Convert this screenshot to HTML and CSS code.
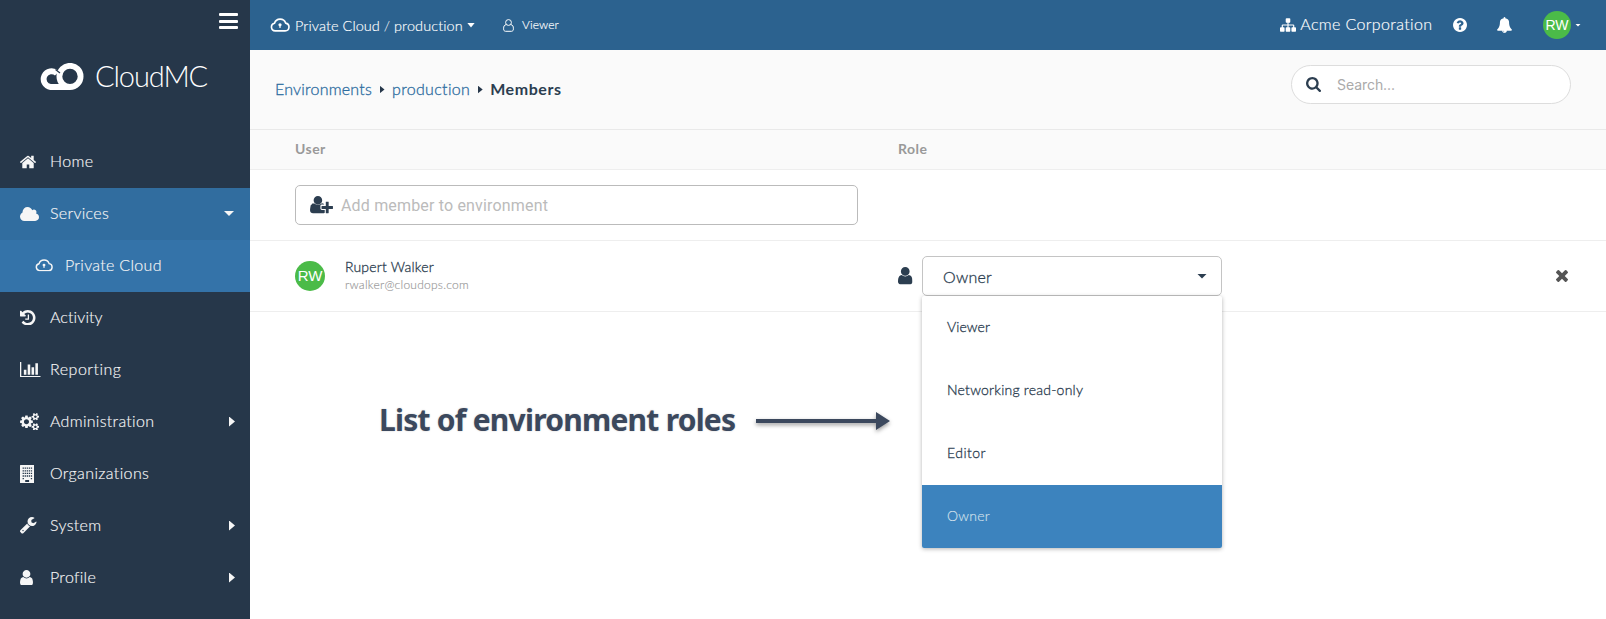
FILE: index.html
```html
<!DOCTYPE html>
<html lang="en">
<head>
<meta charset="utf-8">
<title>Members</title>
<link rel="stylesheet" href="styles.css">
</head>
<body>
<svg class="defs" width="0" height="0">
<symbol id="user" viewBox="256 128 1280 1536"><path d="M1536 1399q0 109-62.500 187t-150.500 78H469q-88 0-150.500-78T256 1399q0-85 8.500-160.500t31.500-152 58.500-131 94-89T583 832q131 128 313 128t313-128q76 0 134.500 34.500t94 89 58.500 131 31.500 152 8.500 160.500zm-256-887q0 159-112.500 271.500T896 896 624.500 783.500 512 512t112.500-271.500T896 128t271.500 112.500T1280 512z"/></symbol>
<symbol id="cloud-lock" viewBox="0 0 20 14"><path d="M5.200 12.900h9.900a3.900 3.900 0 0 0 .6-7.750A5.900 5.900 0 0 0 4.500 5.200a3.900 3.900 0 0 0 .7 7.700z" fill="none" stroke="currentColor" stroke-width="1.600"/><circle cx="10" cy="6.800" r="1.600"/><path d="M9.400 7h1.200v3.100H9.400z"/></symbol>
</svg>
<div class="app">
  <aside class="sidebar">
    <div class="menu-toggle"><i></i><i></i><i></i></div>
    <div class="brand">
      <svg class="brand-mark" width="45" height="28" viewBox="0 0 45 28"><g fill="none" stroke="#fff" stroke-width="5.800"><circle cx="31" cy="13.400" r="10.600"/><path d="M31 24H11.500A7.900 7.900 0 1 1 18 10.500"/></g><path d="M16.500 6.500l4.500 3.500" stroke="#26374a" stroke-width="1.200" fill="none"/></svg>
      <span class="brand-name">CloudMC</span>
    </div>
    <nav class="nav">
      <a class="item"><span class="ico"><svg width="16" height="14" viewBox="89 250 1614 1290"><path d="M1472 992v480q0 26-19 45t-45 19h-384v-384h-256v384h-384q-26 0-45-19t-19-45v-480q0-1 .5-3t.5-3l575-474 575 474q1 2 1 6zm223-69l-62 74q-8 9-21 11h-3q-13 0-21-7l-692-577-692 577q-12 8-24 7-13-2-21-11l-62-74q-8-10-7-23.500t11-21.500l719-599q32-26 76-26t76 26l244 204v-195q0-14 9-23t23-9h192q14 0 23 9t9 23v408l219 182q10 8 11 21.500t-7 23.500z"/></svg></span><span class="lbl n-home">Home</span></a>
      <a class="item open"><span class="ico"><svg width="19" height="14" viewBox="64 128 1920 1408"><path d="M1984 1152q0 159-112.500 271.500T1600 1536H512q-185 0-316.500-131.500T64 1088q0-132 71-241.500T322 683q-2-28-2-43 0-212 150-362t362-150q158 0 286.500 88T1306 446q70-62 166-62 106 0 181 75t75 181q0 75-41 138 129 30 213 134.500t84 239.500z"/></svg></span><span class="lbl">Services</span><b class="caret-down"></b></a>
      <a class="item sub"><span class="ico"><svg width="18" height="12.600"><use href="#cloud-lock"/></svg></span><span class="lbl">Private Cloud</span></a>
      <a class="item"><span class="ico"><svg width="15.500" height="15.500" viewBox="128 128 1536 1536"><path d="M1664 896q0 156-61 298t-164 245-245 164-298 61q-172 0-327-72.500T305 1387q-7-10-6.500-22.500t8.500-20.500l137-138q10-9 25-9 16 2 23 12 73 95 179 147t225 52q104 0 198.500-40.500T1258 1258t109.500-163.500T1408 896t-40.500-198.500T1258 534t-163.500-109.500T896 384q-98 0-188 35.500T548 521l137 138q31 30 14 69-17 40-59 40H192q-26 0-45-19t-19-45V256q0-42 40-59 39-17 69 14l130 129q107-101 244.500-156.500T896 128q156 0 298 61t245 164 164 245 61 298zM1024 608v448q0 14-9 23t-23 9H672q-14 0-23-9t-9-23v-64q0-14 9-23t23-9h224V608q0-14 9-23t23-9h64q14 0 23 9t9 23z"/></svg></span><span class="lbl n-activity">Activity</span></a>
      <a class="item"><span class="ico"><svg width="20.500" height="15.400" viewBox="0 128 2048 1536"><path d="M640 896v512H384V896h256zm384-512v1024H768V384h256zm1024 1152v128H0V128h128v1408h1920zm-640-896v768h-256V640h256zm384-384v1152h-256V256h256z"/></svg></span><span class="lbl n-reporting">Reporting</span></a>
      <a class="item"><span class="ico"><svg width="19.300" height="17.500" viewBox="-64 16 1920 1760"><path d="M832 896q0-106-75-181t-181-75-181 75-75 181 75 181 181 75 181-75 75-181zm768 512q0-52-38-90t-90-38-90 38-38 90q0 53 37.500 90.500t90.500 37.500 90.500-37.500 37.500-90.500zm0-1024q0-52-38-90t-90-38-90 38-38 90q0 53 37.500 90.500t90.500 37.500 90.500-37.500 37.500-90.500zm-384 421v185q0 10-7 19.500t-16 10.500l-155 24q-11 35-32 76 34 48 90 115 7 11 7 20 0 12-7 19-23 30-82.500 89.500t-78.500 59.500q-11 0-21-7l-115-90q-37 19-77 31-11 108-23 155-7 24-30 24h-186q-11 0-20-7.500t-10-17.500l-23-153q-34-10-75-31l-118 89q-7 7-20 7-11 0-21-8-144-133-144-160 0-9 7-19 10-14 41-53t47-61q-23-44-35-82l-152-24q-10-1-17-9.500t-7-19.500v-185q0-10 7-19.500t16-10.500l155-24q11-35 32-76-34-48-90-115-7-11-7-20 0-12 7-20 22-30 82-89t79-59q11 0 21 7l115 90q34-18 77-32 11-108 23-154 7-24 30-24h186q11 0 20 7.500t10 17.500l23 153q34 10 75 31l118-89q8-7 20-7 11 0 21 8 144 133 144 160 0 8-7 19-12 16-42 54t-45 60q23 48 34 82l152 23q10 2 17 10.500t7 19.500zm640 533v140q0 16-149 31-12 27-30 52 51 113 51 138 0 4-4 7-122 71-124 71-8 0-46-47t-52-68q-20 2-30 2t-30-2q-14 21-52 68t-46 47q-2 0-124-71-4-3-4-7 0-25 51-138-18-25-30-52-149-15-149-31v-140q0-16 149-31 13-29 30-52-51-113-51-138 0-4 4-7 4-2 35-20t59-34 30-16q8 0 46 46.500t52 67.500q20-2 30-2t30 2q51-71 92-112l6-2q4 0 124 70 4 3 4 7 0 25-51 138 17 23 30 52 149 15 149 31zm0-1024v140q0 16-149 31-12 27-30 52 51 113 51 138 0 4-4 7-122 71-124 71-8 0-46-47t-52-68q-20 2-30 2t-30-2q-14 21-52 68t-46 47q-2 0-124-71-4-3-4-7 0-25 51-138-18-25-30-52-149-15-149-31v-140q0-16 149-31 13-29 30-52-51-113-51-138 0-4 4-7 4-2 35-20t59-34 30-16q8 0 46 46.500t52 67.500q20-2 30-2t30 2q51-71 92-112l6-2q4 0 124 70 4 3 4 7 0 25-51 138 17 23 30 52 149 15 149 31z"/></svg></span><span class="lbl">Administration</span><b class="caret-right"></b></a>
      <a class="item"><span class="ico"><svg width="14.300" height="18" viewBox="0 0 14.300 18"><path fill-rule="evenodd" d="M.6 0h13.100q.6 0 .6.600v16.800q0 .6-.6.600H.6q-.6 0-.6-.6V.6Q0 0 .6 0zM5.200 15v2h3.900v-2z"/><path d="M2.600 3.200h9.500M2.600 5.800h9.500M2.600 8.400h9.500M2.600 11h9.500M2.600 13.600h1.300M10.800 13.600h1.300" stroke="#26374a" stroke-width="1.300" stroke-dasharray="1.300 .75"/></svg></span><span class="lbl n-org">Organizations</span></a>
      <a class="item"><span class="ico"><svg width="16.500" height="16.500" viewBox="85 128 1641 1643"><path d="M448 1472q0-26-19-45t-45-19-45 19-19 45 19 45 45 19 45-19 19-45zm644-420l-682 682q-37 37-90 37-52 0-91-37L123 1627q-38-36-38-90 0-53 38-91l681-681q39 98 114.500 173.500T1092 1052zm634-435q0 39-23 106-47 134-164.500 217.500T1280 1024q-185 0-316.500-131.500T832 576t131.500-316.500T1280 128q58 0 121.500 16.500T1509 191q16 11 16 28t-16 28l-293 169v224l193 107q5-3 79-48.500t135.500-81T1694 582q15 0 23.500 10t8.500 25z"/></svg></span><span class="lbl">System</span><b class="caret-right"></b></a>
      <a class="item"><span class="ico"><svg width="13" height="15.500"><use href="#user"/></svg></span><span class="lbl">Profile</span><b class="caret-right"></b></a>
    </nav>
  </aside>
  <main class="main">
    <header class="topbar">
      <svg class="top-cloud" width="20" height="14"><use href="#cloud-lock"/></svg>
      <span class="t-private">Private Cloud</span><span class="t-slash">/</span><span class="t-prod">production</span><b class="caret-down top-caret"></b>
      <svg class="role-ico" width="11" height="13" viewBox="0 0 11 13"><g fill="none" stroke="currentColor"><circle cx="5.500" cy="3.500" r="2.900"/><path d="M3.300 5.600C1.200 5.900.6 7.200.6 9.800c0 1.700.8 2.500 1.900 2.500h6c1.100 0 1.900-.8 1.900-2.500 0-2.600-.6-3.900-2.700-4.200"/></g></svg>
      <span class="t-viewer">Viewer</span>
      <span class="grow"></span>
      <svg class="sitemap" width="16" height="14" viewBox="0 128 1792 1536"><path d="M1792 1248v320q0 40-28 68t-68 28h-320q-40 0-68-28t-28-68v-320q0-40 28-68t68-28h96V960H960v192h96q40 0 68 28t28 68v320q0 40-28 68t-68 28H736q-40 0-68-28t-28-68v-320q0-40 28-68t68-28h96V960H320v192h96q40 0 68 28t28 68v320q0 40-28 68t-68 28H96q-40 0-68-28t-28-68v-320q0-40 28-68t68-28h96V960q0-52 38-90t90-38h512V640h-96q-40 0-68-28t-28-68V224q0-40 28-68t68-28h320q40 0 68 28t28 68v320q0 40-28 68t-68 28h-96v192h512q52 0 90 38t38 90v192h96q40 0 68 28t28 68z"/></svg>
      <span class="t-acme">Acme Corporation</span>
      <svg class="help" width="14" height="14" viewBox="128 128 1536 1536"><path d="M1024 1376v-192q0-14-9-23t-23-9H800q-14 0-23 9t-9 23v192q0 14 9 23t23 9h192q14 0 23-9t9-23zm256-672q0-88-55.500-163t-138.500-116-170-41q-243 0-371 213-15 24 8 42l132 100q7 6 19 6 16 0 25-12 53-68 86-92 34-24 86-24 48 0 85.500 26t37.500 59q0 38-20 61t-68 45q-63 28-115.500 86.500T768 1020v36q0 14 9 23t23 9h192q14 0 23-9t9-23q0-19 21.500-49.500T1100 957q32-18 49-28.500t46-35 44.500-48 28-60.500 12.500-81zm384 192q0 209-103 385.500T1281.500 1561 896 1664t-385.500-103T231 1281.500 128 896t103-385.500T510.500 231 896 128t385.500 103T1561 510.500 1664 896z"/></svg>
      <svg class="bell" width="15" height="16" viewBox="64 0 1664 1792"><path d="M912 1696q0-16-16-16-59 0-101.500-42.500T752 1536q0-16-16-16t-16 16q0 73 51.500 124.500T896 1712q16 0 16-16zm816-288q0 52-38 90t-90 38h-448q0 106-75 181t-181 75-181-75-75-181H192q-52 0-90-38t-38-90q50-42 91-88t85-119.500 74.500-158.500 50-206T384 576q0-152 117-282.500T808 135q-8-19-8-39 0-40 28-68t68-28 68 28 28 68q0 20-8 39 190 28 307 158.500T1408 576q0 139 19.500 260t50 206 74.500 158.500 85 119.500 91 88z"/></svg>
      <span class="avatar avatar-top">RW</span><b class="caret-down small"></b>
    </header>
    <section class="toolbar">
      <div class="crumbs"><a class="c-env">Environments</a><b class="crumb-sep"></b><a class="c-prod">production</a><b class="crumb-sep"></b><strong class="c-mem">Members</strong></div>
      <div class="search"><svg width="15" height="15" viewBox="64 128 1664 1664"><path d="M1216 832q0-185-131.500-316.500T768 384 451.500 515.500 320 832t131.500 316.500T768 1280t316.500-131.500T1216 832zm512 832q0 52-38 90t-90 38q-54 0-90-38l-343-342q-179 124-399 124-143 0-273.500-55.500t-225-150-150-225T64 832t55.500-273.500 150-225 225-150T768 128t273.500 55.500 225 150 150 225T1472 832q0 220-124 399l343 343q37 37 37 90z"/></svg><span class="s-ph">Search...</span></div>
    </section>
    <div class="row head"><div class="col-user">User</div><div class="col-role">Role</div></div>
    <div class="row add"><div class="add-box"><svg width="23" height="17.200" viewBox="0 128 2048 1536"><path d="M704 896q-159 0-271.500-112.500T320 512t112.500-271.500T704 128t271.500 112.500T1088 512 975.500 783.500 704 896zm960 128h352q13 0 22.500 9.500t9.500 22.500v192q0 13-9.500 22.500t-22.500 9.500h-352v352q0 13-9.500 22.500t-22.500 9.500h-192q-13 0-22.500-9.500t-9.500-22.500v-352h-352q-13 0-22.500-9.500t-9.500-22.500v-192q0-13 9.500-22.500t22.500-9.500h352V672q0-13 9.500-22.500t22.500-9.500h192q13 0 22.500 9.500t9.500 22.500v352zm-736 224q0 52 38 90t90 38h256v238q-68 50-171 50H267q-121 0-194-69t-73-190q0-53 3.500-103.500t14-109T44 1033t43-97.500 62-81 85.500-53.500T346 781q19 0 39 17 79 61 154.500 91.500T704 920t164.500-30.500T1023 798q20-17 39-17 132 0 217 96h-223q-52 0-90 38t-38 90v192z"/></svg><span class="a-ph">Add member to environment</span></div></div>
    <div class="row member">
      <div class="col-user person"><span class="avatar">RW</span><div class="ident"><div class="p-name">Rupert Walker</div><div class="p-mail">rwalker@cloudops.com</div></div></div>
      <div class="col-role role"><svg class="role-user" width="14.500" height="17.500"><use href="#user"/></svg>
        <div class="select"><span class="sel-val">Owner</span><b class="caret-down"></b>
          <div class="menu"><div class="opt o-viewer">Viewer</div><div class="opt">Networking read-only</div><div class="opt o-editor">Editor</div><div class="opt active">Owner</div></div>
        </div>
      </div>
      <svg class="remove" width="12" height="12" viewBox="302 366 1188 1188"><path d="M1490 1322q0 40-28 68l-136 136q-28 28-68 28t-68-28l-294-294-294 294q-28 28-68 28t-68-28l-136-136q-28-28-28-68t28-68l294-294-294-294q-28-28-28-68t28-68l136-136q28-28 68-28t68 28l294 294 294-294q28-28 68-28t68 28l136 136q28 28 28 68t-28 68l-294 294 294 294q28 28 28 68z"/></svg>
    </div>
    <div class="callout"><span class="note">List of environment roles</span><svg class="arrow" width="134" height="20" viewBox="0 0 134 20"><path d="M0 8h120V1l14 9-14 9v-7H0z"/></svg></div>
  </main>
</div>
</body>
</html>
```

FILE: styles.css
```css
* { box-sizing: border-box; }
body { margin: 0; font-family: Lato, "Open Sans", sans-serif; font-weight: 300; font-size: 16px; color: #2c3e50; background: #fff; }
svg { display: block; flex: none; fill: currentColor; }
.defs { position: absolute; }
span, a, strong { white-space: nowrap; }
.app { display: flex; height: 619px; overflow: hidden; }

.sidebar { width: 250px; flex: none; background: #26374a; color: #f6f6f6; }
.menu-toggle { height: 42px; padding: 13px 12px 0 0; display: flex; flex-direction: column; align-items: flex-end; gap: 3.500px; }
.menu-toggle i { width: 19px; height: 3px; border-radius: 1px; background: #fff; }
.brand { height: 94px; padding: 20px 0 0 39px; display: flex; align-items: flex-start; }
.brand-mark { margin-top: 1px; }
.brand-name { margin-left: 11px; font-size: 29px; line-height: 28px; letter-spacing: -1.100px; color: #fff; }
.item { display: flex; align-items: center; height: 52px; padding: 0 20px 1px; }
.item.open { background: #316d9f; }
.item.sub { background: #3473a9; padding-left: 35px; }
.ico { width: 30px; }
.lbl { padding-bottom: 3px; letter-spacing: .3px; -webkit-text-stroke: .15px; }
.n-home { letter-spacing: .4px; }
.n-activity { letter-spacing: .1px; }
.n-reporting { letter-spacing: .5px; }
.n-org { letter-spacing: .37px; }
.item b { margin-left: auto; }

.caret-down { width: 10px; height: 5px; background: currentColor; clip-path: polygon(0 0, 100% 0, 50% 100%); }
.caret-right { width: 6px; height: 10px; background: currentColor; clip-path: polygon(0 0, 100% 50%, 0 100%); }
.item .caret-right { margin-right: -5px; }
.item .caret-down { margin-right: -4px; }

.main { flex: 1; min-width: 0; }
.topbar { height: 50px; background: #2c628f; color: #fff; display: flex; align-items: center; padding: 0 25px 0 20px; font-size: 14.500px; }
.t-private { width: 85px; margin-left: 5px; letter-spacing: .06px; -webkit-text-stroke: .15px; }
.t-slash { width: 14px; text-align: center; }
.t-prod { width: 69px; letter-spacing: .09px; -webkit-text-stroke: .15px; }
.top-caret { width: 8px; margin-left: 4px; }
.role-ico { margin-left: 28px; }
.t-viewer { font-size: 12px; margin-left: 8px; letter-spacing: .1px; padding-bottom: 1px; -webkit-text-stroke: .15px; }
.grow { flex: 1; }
.t-acme { font-size: 16px; margin-left: 4px; padding-bottom: 3px; letter-spacing: .37px; -webkit-text-stroke: .15px; }
.help { margin-left: 20.500px; }
.bell { margin-left: 30px; }
.avatar { width: 30px; height: 30px; border-radius: 50%; background: #4bbb48; color: #fff; font: 15px/30px "Liberation Sans", Arial, sans-serif; text-align: center; flex: none; }
.avatar-top { width: 28px; height: 28px; line-height: 28px; font-size: 14px; margin-left: 31px; }
.small { width: 6px; height: 3px; margin-left: 4px; }

.toolbar { height: 80px; background: #fafafa; border-bottom: 1px solid #e9e9e9; display: flex; justify-content: space-between; padding: 15px 35px 0 25px; }
.crumbs { display: flex; align-items: center; height: 47px; color: #2c6c9f; -webkit-text-stroke: .3px; }
.crumb-sep { width: 5px; height: 8px; margin: 2px 7.500px 0; background: #26374a; clip-path: polygon(0 0, 100% 50%, 0 100%); }
.c-env { letter-spacing: .22px; }
.c-prod { letter-spacing: .33px; }
.c-mem { color: #2c3e50; font-weight: 700; letter-spacing: .55px; -webkit-text-stroke: 0; }
.search { width: 280px; height: 39px; border: 1px solid #ddd; border-radius: 20px; background: #fff; display: flex; align-items: center; padding-left: 14px; }
.s-ph { margin-left: 16px; font-family: Inter, sans-serif; font-size: 14px; font-weight: 400; color: #aaa; letter-spacing: -.06px; }

.row { display: flex; align-items: center; padding-left: 45px; border-bottom: 1px solid #eee; }
.head { height: 40px; background: #fafafa; font-size: 14px; font-weight: 700; color: #999; padding-bottom: 2px; letter-spacing: .45px; }
.col-user { width: 603px; }
.add { height: 71px; }
.add-box { width: 563px; height: 40px; border: 1px solid #bbb; border-radius: 5px; display: flex; align-items: center; padding-left: 14px; }
.a-ph { margin-left: 8px; font-family: Roboto, sans-serif; font-weight: 400; color: #bbb; letter-spacing: .17px; }
.member { height: 71px; }
.person { display: flex; align-items: center; }
.ident { margin-left: 20px; padding-bottom: 1px; line-height: 18px; }
.p-name { font-size: 14px; letter-spacing: .23px; -webkit-text-stroke: .3px; }
.p-mail { font-size: 12px; color: #999; line-height: 17px; letter-spacing: .25px; -webkit-text-stroke: .15px; }
.role { display: flex; align-items: center; }
.select { position: relative; width: 300px; height: 40px; margin-left: 9.500px; border: 1px solid #c4c4c4; border-radius: 5px; display: flex; align-items: center; justify-content: space-between; padding: 0 14px 0 20px; }
.sel-val { letter-spacing: .26px; -webkit-text-stroke: .3px; }
.menu { position: absolute; left: -1px; top: 39px; width: 300px; background: #fff; box-shadow: 0 1px 4px rgba(0,0,0,.3); border-radius: 2px; overflow: hidden; font-size: 14px; z-index: 2; }
.opt { height: 63px; padding: 0 0 2px 25px; display: flex; align-items: center; letter-spacing: .24px; -webkit-text-stroke: .3px; }
.o-viewer { letter-spacing: .09px; }
.o-editor { letter-spacing: .45px; }
.opt.active { background: #3c83be; color: #d3e1ec; -webkit-text-stroke: .15px; }
.remove { margin-left: auto; margin-right: 38px; fill: #555; }
.callout { display: flex; align-items: center; padding: 85px 0 0 129px; height: 133px; }
.note { font: 700 30px/36px "Noto Sans", sans-serif; letter-spacing: -.76px; padding-bottom: 3px; color: #3b485d; text-shadow: 0 0 2px #ccc; }
.arrow { margin-left: 20.500px; fill: #3b485d; overflow: visible; filter: drop-shadow(0 2px 2px rgba(0,0,0,.4)); }
```
